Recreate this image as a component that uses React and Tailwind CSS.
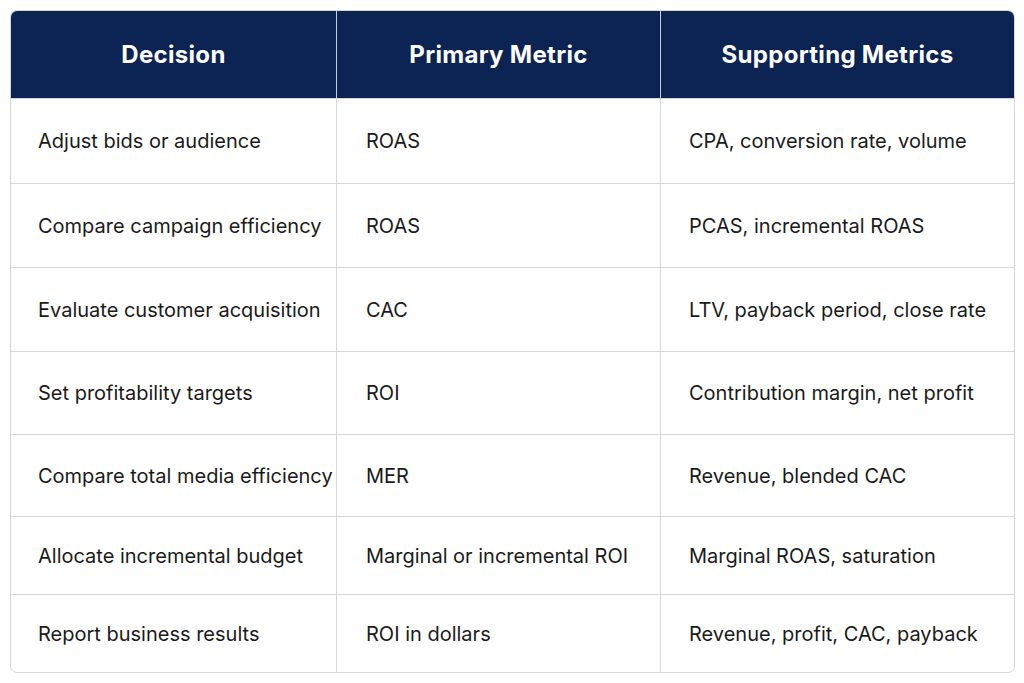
const rows = [
  ['Adjust bids or audience', 'ROAS', 'CPA, conversion rate, volume', 'h-[85px]'],
  ['Compare campaign efficiency', 'ROAS', 'PCAS, incremental ROAS', 'h-[84px]'],
  ['Evaluate customer acquisition', 'CAC', 'LTV, payback period, close rate', 'h-[84px]'],
  ['Set profitability targets', 'ROI', 'Contribution margin, net profit', 'h-[83px]'],
  ['Compare total media efficiency', 'MER', 'Revenue, blended CAC', 'h-[82px]'],
  ['Allocate incremental budget', 'Marginal or incremental ROI', 'Marginal ROAS, saturation', 'h-[78px]'],
  ['Report business results', 'ROI in dollars', 'Revenue, profit, CAC, payback', 'h-[78px]'],
]

export default function App() {
  return (
    <div className="w-[1024px] h-[683px] bg-white p-[10px] font-['Inter',sans-serif]">
      <div className="w-[1005px] rounded-[7px] border border-[#d6d6d6] overflow-hidden">
        <div className="grid grid-cols-[325px_324px_1fr] h-[87px] bg-[#0c2453] text-white text-[24px] font-bold tracking-[0.3px]">
          <div className="flex items-center justify-center">Decision</div>
          <div className="flex items-center justify-center border-l border-[#c9cdd6]">Primary Metric</div>
          <div className="flex items-center justify-center border-l border-[#c9cdd6]">Supporting Metrics</div>
        </div>
        {rows.map(([a, b, c, h]) => (
          <div key={a} className={`grid grid-cols-[325px_324px_1fr] ${h} border-t border-[#d6d6d6] text-[20px] text-[#1a1a1a] whitespace-nowrap`}>
            <div className="flex items-center pl-[27px]">{a}</div>
            <div className="flex items-center pl-[29px] border-l border-[#d6d6d6]">{b}</div>
            <div className="flex items-center pl-[28px] border-l border-[#d6d6d6]">{c}</div>
          </div>
        ))}
      </div>
    </div>
  )
}
